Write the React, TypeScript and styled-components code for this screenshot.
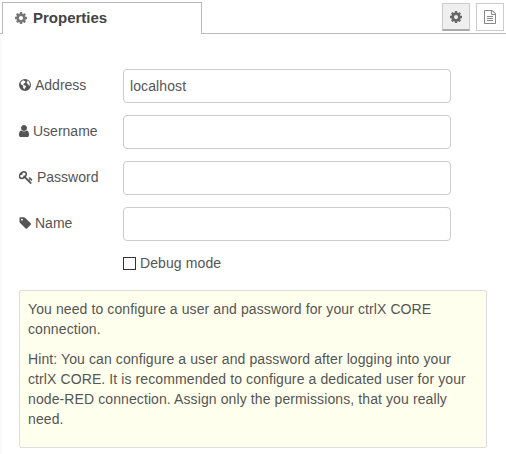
import React from 'react';
import styled, { createGlobalStyle } from 'styled-components';

const GlobalStyle = createGlobalStyle`
  * { box-sizing: border-box; }
  body {
    margin: 0;
    background: #fff;
    color: #555;
    font: 14px/20px "Liberation Sans", Arial, sans-serif;
    letter-spacing: 0.1px;
    overflow: hidden;
  }
`;

const Panel = styled.main`
  height: 454px;
  display: flex;
  flex-direction: column;
`;

const TabBar = styled.header`
  display: flex;
  height: 34px;
  padding-top: 2px;
  flex: none;
`;

const TabEdge = styled.div`
  width: 2px;
  border-bottom: 1px solid #bbb;
`;

const Tab = styled.div`
  width: 200px;
  display: flex;
  align-items: center;
  gap: 6px;
  padding: 0 0 1px 12px;
  border: 1px solid #bbb;
  border-bottom: 0;
  color: #444;
  font-size: 15px;
  font-weight: bold;
  letter-spacing: 0;
`;

const TabActions = styled.div`
  flex: 1;
  display: flex;
  justify-content: flex-end;
  gap: 6px;
  padding: 1px 2px 0 0;
  border-bottom: 1px solid #bbb;
`;

const ActionButton = styled.button<{ $active?: boolean }>`
  width: 28px;
  height: 28px;
  display: flex;
  align-items: center;
  justify-content: center;
  padding: 0;
  border: 1px solid #ccc;
  border-bottom: ${({ $active }) => ($active ? '2px solid #aaa' : '1px solid #ccc')};
  background: ${({ $active }) => ($active ? '#efefef' : '#fff')};
  color: ${({ $active }) => ($active ? '#666' : '#888')};
`;

const Form = styled.form`
  flex: 1;
  padding: 35px 19px 0 17px;
  border-left: 2px solid #fafafa;
`;

const Row = styled.div`
  display: flex;
  align-items: center;
  height: 34px;
  margin-bottom: 12px;
`;

const Label = styled.label`
  width: 104px;
  display: flex;
  align-items: center;
  gap: 4px;
  padding-bottom: 2px;
  letter-spacing: 0;
`;

const TextInput = styled.input`
  width: 328px;
  height: 34px;
  padding: 0 6px;
  border: 1px solid #ccc;
  border-radius: 4px;
  background: #fff;
  color: #555;
  font: inherit;
  letter-spacing: inherit;
  outline: none;
`;

const CheckRow = styled.label`
  display: flex;
  align-items: center;
  gap: 4px;
  height: 20px;
  margin: 0 0 17px 104px;
`;

const Checkbox = styled.input`
  appearance: none;
  width: 13px;
  height: 13px;
  margin: 1px 0 0;
  border: 1px solid #333;
  background: #fff;
`;

const Tips = styled.section`
  width: 468px;
  height: 158px;
  padding: 8px;
  border: 1px solid #ddd;
  border-radius: 2px;
  background: #ffffed;
  p { margin: 0 0 10px; white-space: nowrap; }
`;

const Glyph = styled.svg<{ $color?: string }>`
  flex: none;
  fill: ${({ $color }) => $color ?? 'currentColor'};
`;

const icons = {
  cog: { box: '128 128 1536 1536', w: 12, h: 12, d: 'M1152 896q0-106-75-181t-181-75-181 75-75 181 75 181 181 75 181-75 75-181zm512-109v222q0 12-8 23t-20 13l-185 28q-19 54-39 91 35 50 107 138 10 12 10 25t-9 23q-27 37-99 108t-94 71q-12 0-26-9l-138-108q-44 23-91 38-16 136-29 186-7 28-36 28h-222q-14 0-24.5-8.5t-11.5-21.5l-28-184q-49-16-90-37l-141 107q-10 9-25 9-14 0-25-11-126-114-165-168-7-10-7-23 0-12 8-23 15-21 51-66.5t54-70.5q-27-50-41-99l-183-27q-13-2-21-12.5t-8-23.5v-222q0-12 8-23t19-13l186-28q14-46 39-92-40-57-107-138-10-12-10-24 0-10 9-23 26-36 98.5-107.5t94.5-71.5q13 0 26 10l138 107q44-23 91-38 16-136 29-186 7-28 36-28h222q14 0 24.5 8.5t11.5 21.5l28 184q49 16 90 37l142-107q9-9 24-9 13 0 25 10 129 119 165 170 7 8 7 22 0 12-8 23-15 21-51 66.5t-54 70.5q26 50 41 98l183 28q13 2 21 12.5t8 23.5z' },
  user: { box: '256 128 1280 1536', w: 10, h: 12, d: 'M1536 1399q0 109-62.5 187t-150.5 78h-854q-88 0-150.5-78t-62.5-187q0-85 8.5-160.5t31.5-152 58.5-131 94-89 134.5-34.5q131 128 313 128t313-128q76 0 134.5 34.5t94 89 58.5 131 31.5 152 8.5 160.5zm-256-887q0 159-112.5 271.5t-271.5 112.5-271.5-112.5-112.5-271.5 112.5-271.5 271.5-112.5 271.5 112.5 112.5 271.5z' },
  tag: { box: '64 128 1579 1515', w: 12, h: 12, d: 'M576 448q0-53-37.5-90.5t-90.5-37.5-90.5 37.5-37.5 90.5 37.5 90.5 90.5 37.5 90.5-37.5 37.5-90.5zm1067 576q0 53-37 90l-491 492q-39 37-91 37-53 0-90-37l-715-716q-38-37-64.5-101t-26.5-117v-416q0-52 38-90t90-38h416q53 0 117 26.5t102 64.5l715 714q37 39 37 91z' },
  key: { box: '64 128 1664 1600', w: 14, h: 13, d: 'M832 512q0-80-56-136t-136-56-136 56-56 136q0 42 19 83-41-19-83-19-80 0-136 56t-56 136 56 136 136 56 136-56 56-136q0-42-19-83 41 19 83 19 80 0 136-56t56-136zm851 704q0 17-49 66t-66 49q-9 0-28.5-16t-36.5-33-38.5-40-24.5-26l-96 96 220 220q28 28 28 68 0 42-39 81t-81 39q-40 0-68-28l-671-671q-176 131-365 131-163 0-265.5-102.5t-102.5-265.5q0-160 95-313t248-248 313-95q163 0 265.5 102.5t102.5 265.5q0 189-131 365l355 355 96-96q-3-3-26-24.5t-40-38.5-33-36.5-16-28.5q0-17 49-66t66-49q13 0 23 10 6 6 46 44.5t82 79.5 86.5 86 73 78 28.5 41z' },
  file: { box: '128 0 1536 1792', w: 12, h: 14, d: 'M1596 380q28 28 48 76t20 88v1152q0 40-28 68t-68 28h-1344q-40 0-68-28t-28-68v-1600q0-40 28-68t68-28h896q40 0 88 20t76 48zm-444-244v376h376q-10-29-22-41l-313-313q-12-12-41-22zm384 1528v-1024h-416q-40 0-68-28t-28-68v-416h-768v1536h1280zM512 768h768v128h-768zM512 1024h768v128h-768zM512 1280h768v128h-768z' },
  globe: { box: '0 0 12 12', w: 12, h: 12, d: 'M6 0a6 6 0 1 1 0 12a6 6 0 0 1 0-12zM4.2 1.3L2.7 2.2L1.6 3.8L2 5.2L3 6L4.2 6.8L4 8.2L5.2 10.6L6.2 8.8L7.2 7.8L6.5 6.8L4.8 6L4.2 5.2L5.4 4.2L6.8 3L5.6 2.1zM7.8 1.3L8.4 2.4L7.6 3.8L8.7 5.2L9.7 5.8L10 7.2L10.8 6.2L10.7 4.3L9.8 2.5z' },
};

function Icon({ name, color }: { name: keyof typeof icons; color?: string }) {
  const { box, w, h, d } = icons[name];
  return (
    <Glyph width={w} height={h} viewBox={box} $color={color} aria-hidden="true">
      <path d={d} fillRule="evenodd" />
    </Glyph>
  );
}

const fields: { label: string; icon: keyof typeof icons; value: string }[] = [
  { label: 'Address', icon: 'globe', value: 'localhost' },
  { label: 'Username', icon: 'user', value: '' },
  { label: 'Password', icon: 'key', value: '' },
  { label: 'Name', icon: 'tag', value: '' },
];

export default function App() {
  return (
    <>
      <GlobalStyle />
      <Panel>
        <TabBar>
          <TabEdge />
          <Tab><Icon name="cog" color="#777" />Properties</Tab>
          <TabActions>
            <ActionButton $active aria-label="Properties"><Icon name="cog" /></ActionButton>
            <ActionButton aria-label="Description"><Icon name="file" /></ActionButton>
          </TabActions>
        </TabBar>
        <Form>
          {fields.map(({ label, icon, value }) => (
            <Row key={label}>
              <Label htmlFor={label}><Icon name={icon} />{label}</Label>
              <TextInput id={label} defaultValue={value} />
            </Row>
          ))}
          <CheckRow><Checkbox type="checkbox" />Debug mode</CheckRow>
          <Tips>
            <p>You need to configure a user and password for your ctrlX CORE<br />connection.</p>
            <p>
              Hint: You can configure a user and password after logging into your<br />
              ctrlX CORE. It is recommended to configure a dedicated user for your<br />
              node-RED connection. Assign only the permissions, that you really<br />
              need.
            </p>
          </Tips>
        </Form>
      </Panel>
    </>
  );
}
